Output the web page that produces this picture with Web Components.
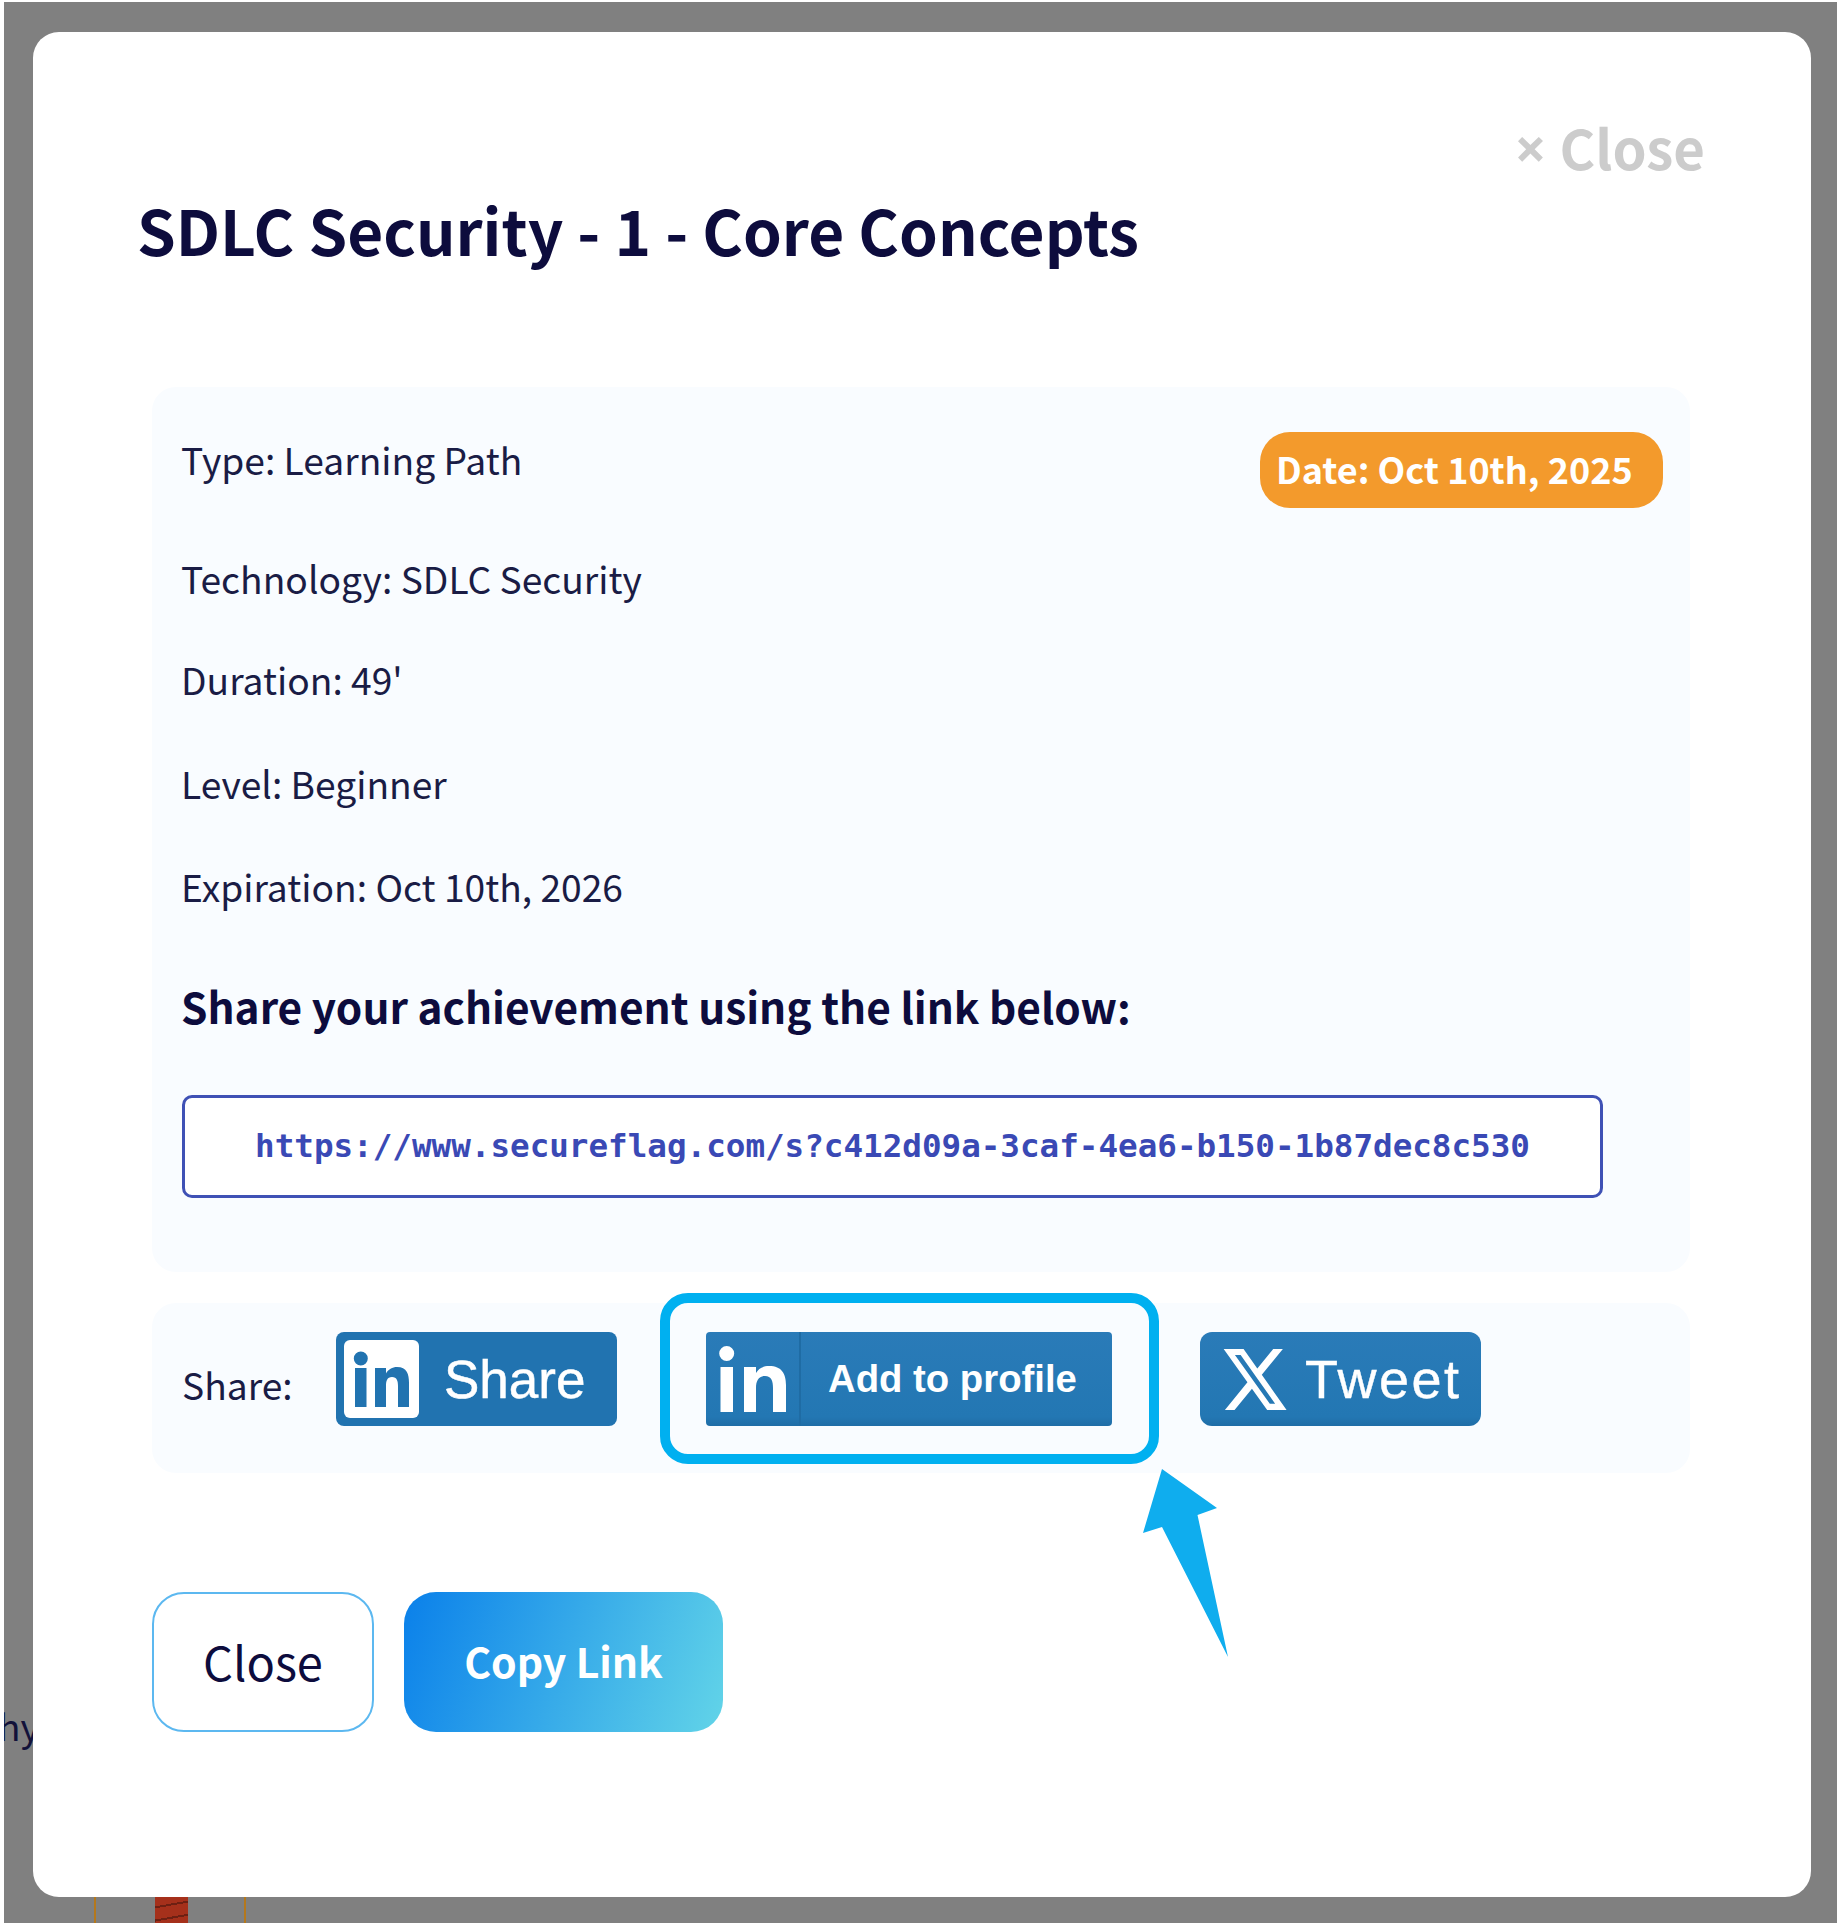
<!DOCTYPE html>
<html><head><meta charset="utf-8">
<style>
html,body{margin:0;background:#fff}
body{font-family:"Noto Sans CJK SC","Noto Sans",sans-serif;color:#1a1c45;padding:2px 0 2px 4px;height:1921px}
</style></head><body>
<sf-backdrop>
<sf-modal>
<sf-header></sf-header>
<sf-info></sf-info>
<sf-share></sf-share>
<sf-actions></sf-actions>
</sf-modal>
</sf-backdrop>
<script>
const def=(n,html)=>customElements.define(n,class extends HTMLElement{constructor(){super();this.attachShadow({mode:'open'}).innerHTML=html;}});
def('sf-backdrop',`<style>:host{display:block;position:relative;height:1921px;overflow:hidden;background:#808080;padding:30px 26px 26px 29px;box-sizing:border-box}
.hy{position:absolute;left:-6px;top:1699px;font-size:37px;line-height:48px;color:#12123a}
.o{position:absolute;top:1880px;width:2px;height:41px;background:#b5781c}.r{position:absolute;left:151px;top:1880px;width:33px;height:41px;background:repeating-linear-gradient(170deg,#a5301b 0 11px,#6d2013 11px 13px)}</style>
<span class="hy">hy</span><i class="o" style="left:90px"></i><i class="o" style="left:240px"></i><i class="r"></i><slot></slot>`);
def('sf-modal',`<style>:host{display:block;position:relative;height:1865px;box-sizing:border-box;background:#fff;border-radius:26px;padding:88px 106px 0}</style><slot></slot>`);
def('sf-header',`<style>:host{display:flex;justify-content:space-between;align-items:flex-start;height:149px}
h1{margin:73px 0 0 -2px;font-size:62.100px;line-height:72px;font-weight:700;color:#0d0c3d}.c{margin-top:-3px;font-size:54.500px;line-height:60px;font-weight:700;color:#ccc;display:flex;gap:13px}.x{font-family:"Noto Sans",sans-serif;font-size:56px}</style>
<h1>SDLC Security - 1 - Core Concepts</h1><span class="c"><span class="x">×</span><span>Close</span></span>`);
def('sf-info',`<style>:host{display:block;margin:118px 15px 0 13px;height:885px;box-sizing:border-box;background:#f9fcff;border-radius:24px;padding:45px 27px 0 30px}
.top{display:flex;justify-content:space-between;align-items:flex-start}
p{margin:0 0 0 -1px;font-size:37.200px;line-height:48px}.t{margin-top:3px}
.b{background:#f39a2c;color:#fff;font-weight:700;font-size:36px;line-height:73px;height:76px;padding:0 16px;border-radius:30px;width:403px;box-sizing:border-box;white-space:nowrap}
h2{margin:72px 0 0 -1px;font-size:42.400px;line-height:48px;font-weight:700;color:#0d0c3d}
.l{margin-top:65px;width:1421px;height:103px;box-sizing:border-box;border:3px solid #3f51b5;border-radius:10px;background:#fff;color:#3a49b5;display:flex;align-items:center;justify-content:center;padding-bottom:2px;font:700 32.600px "DejaVu Sans Mono",monospace}</style>
<div class="top"><p class="t">Type: Learning Path</p><span class="b">Date: Oct 10th, 2025</span></div>
<p style="margin-top:46px">Technology: SDLC Security</p><p style="margin-top:53px">Duration: 49'</p><p style="margin-top:56px">Level: Beginner</p><p style="margin-top:55px">Expiration: Oct 10th, 2026</p>
<h2>Share your achievement using the link below:</h2><div class="l">https://www.secureflag.com/s?c412d09a-3caf-4ea6-b150-1b87dec8c530</div>`);
def('sf-share',`<style>:host{display:flex;align-items:flex-start;position:relative;margin:31px 15px 0 13px;height:170px;box-sizing:border-box;background:#f9fcff;border-radius:24px;padding:29px 0 0 30px;font-family:"Liberation Sans",sans-serif}
.s{font:37.200px/48px "Noto Sans CJK SC","Noto Sans",sans-serif;width:154px;margin:28px 0 0 -1px;padding-left:1px;flex:none;box-sizing:border-box}
.btn{box-sizing:border-box;height:94px;color:#fff;display:flex;align-items:center;position:relative;background:linear-gradient(#2a7bb8,#2377b3 90%,#1f6da6);flex:none}
.a{width:281px;background:#2173b0;border-radius:8px;font-size:53px;-webkit-text-stroke:.5px #fff;margin-left:1px}.a .w{margin-left:8px;width:75px;height:78px;background:#fff;border-radius:6px;flex:none}.a span{margin-left:25px}
.p{width:406px;margin-left:89px;border-radius:4px;font-weight:700;font-size:38.300px}.p .i{width:95px;height:94px;border-right:2px solid #1f6ca4;box-sizing:border-box;flex:none}.p span{margin-left:27px}
.t{width:281px;margin-left:88px;border-radius:12px;font-size:54px;letter-spacing:2.500px;-webkit-text-stroke:.4px #fff}.t span{margin-left:15px}
svg{display:block}
.hl{position:absolute;left:-46px;right:-47px;top:-39px;bottom:-38px;border:10px solid #00b0f0;border-radius:28px;box-sizing:border-box}
.ar{position:absolute;left:437px;top:137px}</style>
<span class="s">Share:</span>
<div class="btn a"><div class="w"><svg width="75" height="78" viewBox="0 0 75 78"><path fill="#2173b0" d="M11 28h11.500v39H11zM16.800 11.500a7 7 0 1 1 0 14 7 7 0 0 1 0-14zM31 28h11v5.500c2-4 6.500-6.500 11-6.500 10 0 12 7 12 16v24H54V46c0-5-1-9-6-9s-6 4-6 9v21H31z"/></svg></div><span>Share</span></div>
<div class="btn p"><div class="i"><svg width="93" height="94" viewBox="0 0 93 94"><path fill="#fff" d="M14.500 35h12.500v45H14.500zM20.700 14a7.500 7.500 0 1 1 0 15 7.500 7.500 0 0 1 0-15zM38 35h12v6c2.500-4.500 7-7 13-7 13 0 17 8 17 19v27H67V56c0-7-1.500-12-8-12s-9 5-9 12v24H38z"/></svg></div><span>Add to profile</span><i class="hl"></i>
<svg class="ar" width="90" height="195" viewBox="0 0 90 195"><path fill="#0fadee" d="M19 0 74 39 54.500 46 85 188 19 58 0 64z"/></svg></div>
<div class="btn t"><svg style="margin-left:20px" width="70" height="75" viewBox="0 0 24 24" preserveAspectRatio="none"><path fill="#fff" d="M18.244 2.250h3.308l-7.227 8.260 8.502 11.240H16.170l-5.214-6.817L4.990 21.750H1.680l7.730-8.835L1.254 2.250H8.080l4.713 6.231zm-1.161 17.520h1.833L7.084 4.126H5.117z"/></svg><span>Tweet</span></div>`);
def('sf-actions',`<style>:host{display:flex;gap:30px;margin:119px 0 0 13px}
button{all:unset;box-sizing:border-box;height:140px;border-radius:32px;font-family:"Noto Sans CJK SC","Noto Sans",sans-serif;text-align:center;font-size:47px;padding-bottom:4px}
.c{width:222px;border:2.500px solid #5cb8f0;background:#fff;color:#0d0c3d}.k{width:319px;color:#fff;font-weight:700;font-size:41px;background:linear-gradient(110deg,#0a80ea,#62d4e8)}</style>
<button class="c">Close</button><button class="k">Copy Link</button>`);
</script></body></html>
